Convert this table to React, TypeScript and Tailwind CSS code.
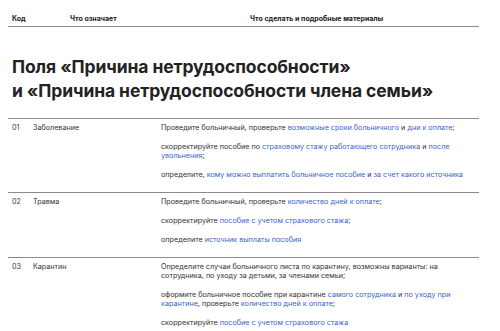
import React from 'react';

type Part = string | { link: string };

type Row = {
  code: string;
  name: string;
  items: Part[][];
};

const rows: Row[] = [
  {
    code: '01',
    name: 'Заболевание',
    items: [
      ['Проведите больничный, проверьте ', { link: 'возможные сроки больничного' }, ' и ', { link: 'дни к оплате' }, ';'],
      ['скорректируйте пособие по ', { link: 'страховому стажу работающего сотрудника' }, ' и ', { link: 'после увольнения' }, ';'],
      ['определите, ', { link: 'кому можно выплатить больничное пособие' }, ' и ', { link: 'за счет какого источника' }],
    ],
  },
  {
    code: '02',
    name: 'Травма',
    items: [
      ['Проведите больничный, проверьте ', { link: 'количество дней к оплате' }, ';'],
      ['скорректируйте ', { link: 'пособие с учетом страхового стажа' }, ';'],
      ['определите ', { link: 'источник выплаты пособия' }],
    ],
  },
  {
    code: '03',
    name: 'Карантин',
    items: [
      ['Определите случаи больничного листа по карантину, возможны варианты: на сотрудника, по уходу за детьми, за членами семьи;'],
      ['оформите больничное пособие при карантине ', { link: 'самого сотрудника' }, ' и ', { link: 'по уходу при карантине' }, ', проверьте ', { link: 'количество дней к оплате' }, ';'],
      ['скорректируйте ', { link: 'пособие с учетом страхового стажа' }],
    ],
  },
];

const App: React.FC = () => {
  return (
    <div className="w-[500px] h-[331px] overflow-hidden bg-white text-[#333] font-['Inter',sans-serif]">
      <div className="pl-2 w-[479px]">
        {/* Шапка таблицы */}
        <div className="flex pt-[14px] pb-[3px] border-b border-[#8a8a8a] text-[7px] leading-[9px] font-bold text-[#222]">
          <div className="pl-1 w-[62px]">Код</div>
          <div className="w-[180px]">Что означает</div>
          <div>Что сделать и подробные материалы</div>
        </div>

        <h2 className="pl-1 pt-[28px] pb-[15px] text-[17.5px] leading-[24px] font-bold text-[#222] tracking-[-0.1px]">
          Поля «Причина нетрудоспособности»
          <br />
          и «Причина нетрудоспособности члена семьи»
        </h2>

        {rows.map((row) => (
          <div key={row.code} className="flex border-t border-[#8a8a8a] pt-1 pb-[3px] text-[7.2px] leading-[9px]">
            <div className="pl-1 w-[25px] shrink-0">{row.code}</div>
            <div className="w-[128px] shrink-0">{row.name}</div>
            <div className="flex-1">
              {row.items.map((parts, i) => (
                <p key={i} className="mb-[10px]">
                  {parts.map((p, j) =>
                    typeof p === 'string' ? (
                      <span key={j}>{p}</span>
                    ) : (
                      <a key={j} className="text-[#3a5fcd]">{p.link}</a>
                    )
                  )}
                </p>
              ))}
            </div>
          </div>
        ))}
      </div>
    </div>
  );
};

export default App;
